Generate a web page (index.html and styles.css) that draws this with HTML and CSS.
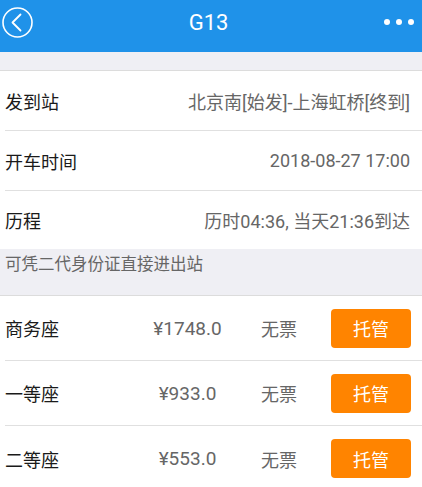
FILE: index.html
```html
<!DOCTYPE html>
<html lang="zh-CN">
<head>
    <meta charset="UTF-8">
    <meta name="viewport" content="width=device-width, initial-scale=1.0">
    <title>G13</title>
    <link rel="stylesheet" href="styles.css">
</head>
<body>

    <!-- Header -->
    <div class="header">
        <svg class="back-icon" width="31" height="31" viewBox="0 0 31 31">
            <circle cx="15.5" cy="15.5" r="14.5" fill="none" stroke="#fff" stroke-width="1.6"/>
            <path d="M18.5 7.5 L10.5 15.5 L18.5 23.5" fill="none" stroke="#fff" stroke-width="1.8" stroke-linecap="round" stroke-linejoin="round"/>
        </svg>
        <div class="title">G13</div>
        <svg class="more-icon" width="30" height="31" viewBox="0 0 30 31">
            <circle cx="3" cy="15" r="3" fill="#fff"/>
            <circle cx="15" cy="15" r="3" fill="#fff"/>
            <circle cx="27" cy="15" r="3" fill="#fff"/>
        </svg>
    </div>

    <div class="spacer"></div>

    <!-- Train Info -->
    <div class="info-list">
        <div class="info-row">
            <div class="info-label">发到站</div>
            <div class="info-value">北京南[始发]-上海虹桥[终到]</div>
        </div>
        <div class="info-row">
            <div class="info-label">开车时间</div>
            <div class="info-value">2018-08-27 17:00</div>
        </div>
        <div class="info-row">
            <div class="info-label">历程</div>
            <div class="info-value">历时04:36, 当天21:36到达</div>
        </div>
    </div>

    <div class="notice">可凭二代身份证直接进出站</div>

    <!-- Seats -->
    <div class="seat-list">
        <div class="seat-row">
            <div class="seat-name">商务座</div>
            <div class="seat-price">¥1748.0</div>
            <div class="seat-status">无票</div>
            <button class="seat-btn">托管</button>
        </div>
        <div class="seat-row">
            <div class="seat-name">一等座</div>
            <div class="seat-price">¥933.0</div>
            <div class="seat-status">无票</div>
            <button class="seat-btn">托管</button>
        </div>
        <div class="seat-row">
            <div class="seat-name">二等座</div>
            <div class="seat-price">¥553.0</div>
            <div class="seat-status">无票</div>
            <button class="seat-btn">托管</button>
        </div>
    </div>

</body>
</html>
```

FILE: styles.css
```css
* {
    margin: 0;
    padding: 0;
    box-sizing: border-box;
    font-family: Roboto, "Noto Sans CJK SC", sans-serif;
}
body {
    background-color: #ffffff;
    color: #1a1a1a;
}
.header {
    background-color: #1f92e9;
    height: 52px;
    display: flex;
    align-items: flex-start;
    padding-top: 7px;
}
.back-icon {
    margin-left: 2px;
    flex-shrink: 0;
}
.title {
    flex: 1;
    text-align: center;
    color: #ffffff;
    font-size: 22px;
    line-height: 31px;
}
.more-icon {
    margin-right: 8px;
    flex-shrink: 0;
}
.spacer {
    height: 19px;
    background-color: #efeff4;
    border-bottom: 1px solid #dcdcdc;
}
.info-list {
    padding-left: 5px;
}
.info-row {
    height: 60px;
    display: flex;
    align-items: center;
    justify-content: space-between;
    padding-right: 12px;
    border-bottom: 1px solid #e0e0e0;
}
.info-row:last-child {
    height: 58px;
    border-bottom: none;
}
.info-label {
    font-size: 18px;
}
.info-value {
    font-size: 18px;
    color: #666666;
}
.notice {
    height: 47px;
    background-color: #efeff4;
    border-bottom: 1px solid #dcdcdc;
    padding: 6px 5px 0;
    font-size: 16.5px;
    line-height: 20px;
    color: #666666;
}
.seat-list {
    padding-left: 5px;
}
.seat-row {
    height: 65px;
    display: flex;
    align-items: center;
    border-bottom: 1px solid #e0e0e0;
}
.seat-row:last-child {
    border-bottom: none;
}
.seat-name {
    flex: 0 0 130px;
    font-size: 18px;
}
.seat-price {
    flex: 0 0 105px;
    text-align: center;
    font-size: 19px;
    color: #666666;
}
.seat-status {
    flex: 0 0 78px;
    text-align: center;
    font-size: 18px;
    color: #666666;
}
.seat-btn {
    margin-left: auto;
    margin-right: 11px;
    width: 80px;
    height: 39px;
    background-color: #ff8400;
    color: #ffffff;
    border: none;
    border-radius: 4px;
    font-size: 18px;
}
```
